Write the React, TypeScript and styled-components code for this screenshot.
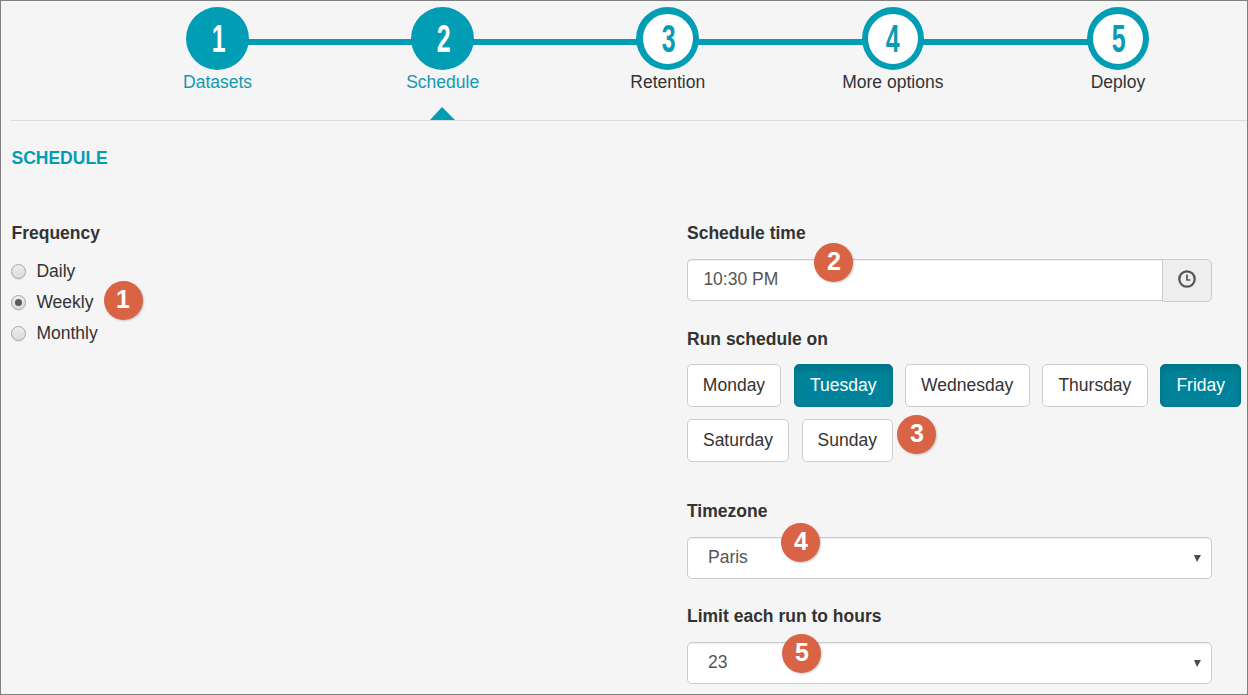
import React from "react";
import styled, { createGlobalStyle, css } from "styled-components";

const teal = "#009db5";
const ink = "#333333";

const GlobalStyle = createGlobalStyle`
  *, *::before, *::after { box-sizing: border-box; }
  body {
    margin: 0;
    background: #f5f5f5;
    color: ${ink};
    font: 17.5px/25px "Liberation Sans", Arial, sans-serif;
  }
`;

const Page = styled.main`
  width: 1248px;
  height: 695px;
  border: 1px solid #7f7f7f;
  background: #f5f5f5;
  overflow: hidden;
`;

const Wizard = styled.ol`
  display: flex;
  list-style: none;
  margin: 0 0 0 10px;
  padding: 6px 0 0 94px;
  height: 120px;
  border-bottom: 1px solid #dcdcdc;
`;

const Step = styled.li<{ $reached?: boolean }>`
  position: relative;
  flex: 0 0 225.1px;
  display: flex;
  flex-direction: column;
  align-items: center;
  color: ${(p) => (p.$reached ? "#1199b4" : ink)};

  &:not(:last-child)::before {
    content: "";
    position: absolute;
    top: 32px;
    left: 50%;
    width: 100%;
    height: 6px;
    background: ${teal};
  }
`;

const StepCircle = styled.span<{ $reached?: boolean; $width: number }>`
  position: relative;
  z-index: 1;
  display: flex;
  align-items: center;
  justify-content: center;
  width: ${(p) => p.$width}px;
  height: 63px;
  border-radius: 50%;
  border: solid ${teal};
  border-width: 7px 6px 6px ${(p) => p.$width - 56}px;
  background: ${(p) => (p.$reached ? teal : "#fff")};
  color: ${(p) => (p.$reached ? "#fff" : "#0b9bb3")};
`;

const StepNumber = styled.span`
  padding-left: 1px;
  font-size: 39px;
  font-weight: bold;
  line-height: 50px;
  transform: scaleX(0.64);
`;

const StepArrow = styled.span`
  margin-top: 12px;
  border: solid transparent;
  border-width: 0 13px 13px 12px;
  border-bottom-color: ${teal};
`;

const Title = styled.h1`
  margin: 25px 0 0 10.5px;
  font-size: 17.5px;
  line-height: 25px;
  color: ${teal};
`;

const Columns = styled.div`
  display: grid;
  grid-template-columns: 675.5px 1fr;
  padding: 50px 0 0 10.5px;
`;

const Column = styled.section`
  display: flex;
  flex-direction: column;
`;

const Field = styled.div<{ $after?: number }>`
  margin-bottom: ${(p) => p.$after ?? 0}px;
`;

const Label = styled.div<{ $gap: number }>`
  font-weight: bold;
  margin-bottom: ${(p) => p.$gap}px;
`;

const RadioRow = styled.label`
  position: relative;
  display: flex;
  align-items: center;
  width: max-content;
  gap: 10.5px;
  margin: 0 0 6px -0.6px;
`;

const Radio = styled.span<{ $checked?: boolean }>`
  display: flex;
  align-items: center;
  justify-content: center;
  width: 15px;
  height: 15px;
  border: 1px solid #a6a6a6;
  border-radius: 50%;
  background: linear-gradient(#ededed, #dcdcdc);
  box-shadow: 0 1px 1px rgba(0, 0, 0, 0.08);
  ${(p) =>
    p.$checked &&
    css`
      &::after {
        content: "";
        width: 7px;
        height: 7px;
        border-radius: 50%;
        background: #5b5b5b;
      }
    `}
`;

const Anchor = styled.div`
  position: relative;
`;

const Marker = styled.span<{ $x: number; $y: number }>`
  position: absolute;
  z-index: 2;
  left: ${(p) => p.$x}px;
  top: ${(p) => p.$y}px;
  width: 39px;
  height: 39px;
  border-radius: 50%;
  background: #d96445;
  color: #fff;
  font: bold 25px/37px "Liberation Sans", Arial, sans-serif;
  text-align: center;
  box-shadow: 1px 1px 2px rgba(0, 0, 0, 0.2);
`;

const TimeInput = styled.div`
  display: flex;
  align-items: flex-start;
  width: 525px;
  height: 43px;
  color: #555;
`;

const TimeValue = styled.div`
  flex: 1;
  height: 42px;
  padding: 7px 15.4px;
  border: 1px solid #ccc;
  border-right: 0;
  border-radius: 5px 0 0 5px;
  background: #fff;
  box-shadow: inset 0 1px 1px rgba(0, 0, 0, 0.075);
`;

const ClockButton = styled.div`
  display: flex;
  justify-content: center;
  padding-top: 10px;
  width: 50px;
  height: 43px;
  border: 1px solid #ccc;
  border-radius: 0 5px 5px 0;
  background: #eee;
`;

const Days = styled.div`
  position: relative;
  display: flex;
  flex-wrap: wrap;
  gap: 12px 12.3px;
  width: 558px;
`;

const Day = styled.button<{ $width: number; $active?: boolean }>`
  width: ${(p) => p.$width}px;
  height: 43px;
  padding: 0 0 1px;
  border: 1px solid ${(p) => (p.$active ? "#00788b" : "#ccc")};
  border-radius: 5px;
  background: ${(p) => (p.$active ? "#00839a" : "#fff")};
  color: ${(p) => (p.$active ? "#fff" : ink)};
  font: inherit;
  box-shadow: ${(p) => (p.$active ? "inset 0 4px 6px rgba(0, 0, 0, 0.125)" : "none")};

  &:nth-child(2) { margin-left: 0.5px; }
  &:nth-child(3) { margin-left: -0.5px; }
  &:nth-child(7) { margin-left: 0.5px; }
`;

const Select = styled.div`
  display: flex;
  justify-content: space-between;
  width: 525px;
  height: 42px;
  padding: 7px 10px 0 20px;
  border: 1px solid #ccc;
  border-radius: 5px;
  background: #fff;
  color: #555;
  box-shadow: inset 0 1px 1px rgba(0, 0, 0, 0.075);
`;

const Caret = styled.span`
  margin-top: 10px;
  width: 0;
  height: 0;
  border: solid transparent;
  border-width: 7px 4px 0 3px;
  border-top-color: #4c4c4c;
`;

const steps = [
  { name: "Datasets", width: 63 },
  { name: "Schedule", width: 63 },
  { name: "Retention", width: 63 },
  { name: "More options", width: 62 },
  { name: "Deploy", width: 62 },
];

const days = [
  { name: "Monday", width: 94 },
  { name: "Tuesday", width: 99, active: true },
  { name: "Wednesday", width: 125 },
  { name: "Thursday", width: 106 },
  { name: "Friday", width: 81, active: true },
  { name: "Saturday", width: 102 },
  { name: "Sunday", width: 91 },
];

const ClockIcon = () => (
  <svg width="18" height="18" viewBox="0 0 18 18" fill="none" stroke="#555">
    <circle cx="9" cy="9" r="7.7" strokeWidth="2.3" />
    <path d="M9 4.5V10H12.4" strokeWidth="1.7" />
  </svg>
);

export default function App() {
  return (
    <>
      <GlobalStyle />
      <Page>
        <Wizard>
          {steps.map((step, i) => (
            <Step key={step.name} $reached={i < 2}>
              <StepCircle $reached={i < 2} $width={step.width}>
                <StepNumber>{i + 1}</StepNumber>
              </StepCircle>
              {step.name}
              {i === 1 && <StepArrow />}
            </Step>
          ))}
        </Wizard>
        <Title>SCHEDULE</Title>
        <Columns>
          <Column>
            <Label $gap={13}>Frequency</Label>
            {["Daily", "Weekly", "Monthly"].map((name) => (
              <RadioRow key={name}>
                <Radio $checked={name === "Weekly"} />
                {name}
                {name === "Weekly" && (
                  <Marker $x={92.6} $y={-9.5}>
                    1
                  </Marker>
                )}
              </RadioRow>
            ))}
          </Column>
          <Column>
            <Field $after={25}>
              <Label $gap={13}>Schedule time</Label>
              <Anchor>
                <TimeInput>
                  <TimeValue>10:30 PM</TimeValue>
                  <ClockButton>
                    <ClockIcon />
                  </ClockButton>
                </TimeInput>
                <Marker $x={127.4} $y={-16.5}>
                  2
                </Marker>
              </Anchor>
            </Field>
            <Field $after={37}>
              <Label $gap={12}>Run schedule on</Label>
              <Days>
                {days.map((d) => (
                  <Day key={d.name} $width={d.width} $active={d.active}>
                    {d.name}
                  </Day>
                ))}
                <Marker $x={210.4} $y={50.5}>
                  3
                </Marker>
              </Days>
            </Field>
            <Field $after={25}>
              <Label $gap={13}>Timezone</Label>
              <Anchor>
                <Select>
                  Paris
                  <Caret />
                </Select>
                <Marker $x={94.4} $y={-14.5}>
                  4
                </Marker>
              </Anchor>
            </Field>
            <Field>
              <Label $gap={13}>Limit each run to hours</Label>
              <Anchor>
                <Select>
                  23
                  <Caret />
                </Select>
                <Marker $x={95.4} $y={-8.5}>
                  5
                </Marker>
              </Anchor>
            </Field>
          </Column>
        </Columns>
      </Page>
    </>
  );
}
